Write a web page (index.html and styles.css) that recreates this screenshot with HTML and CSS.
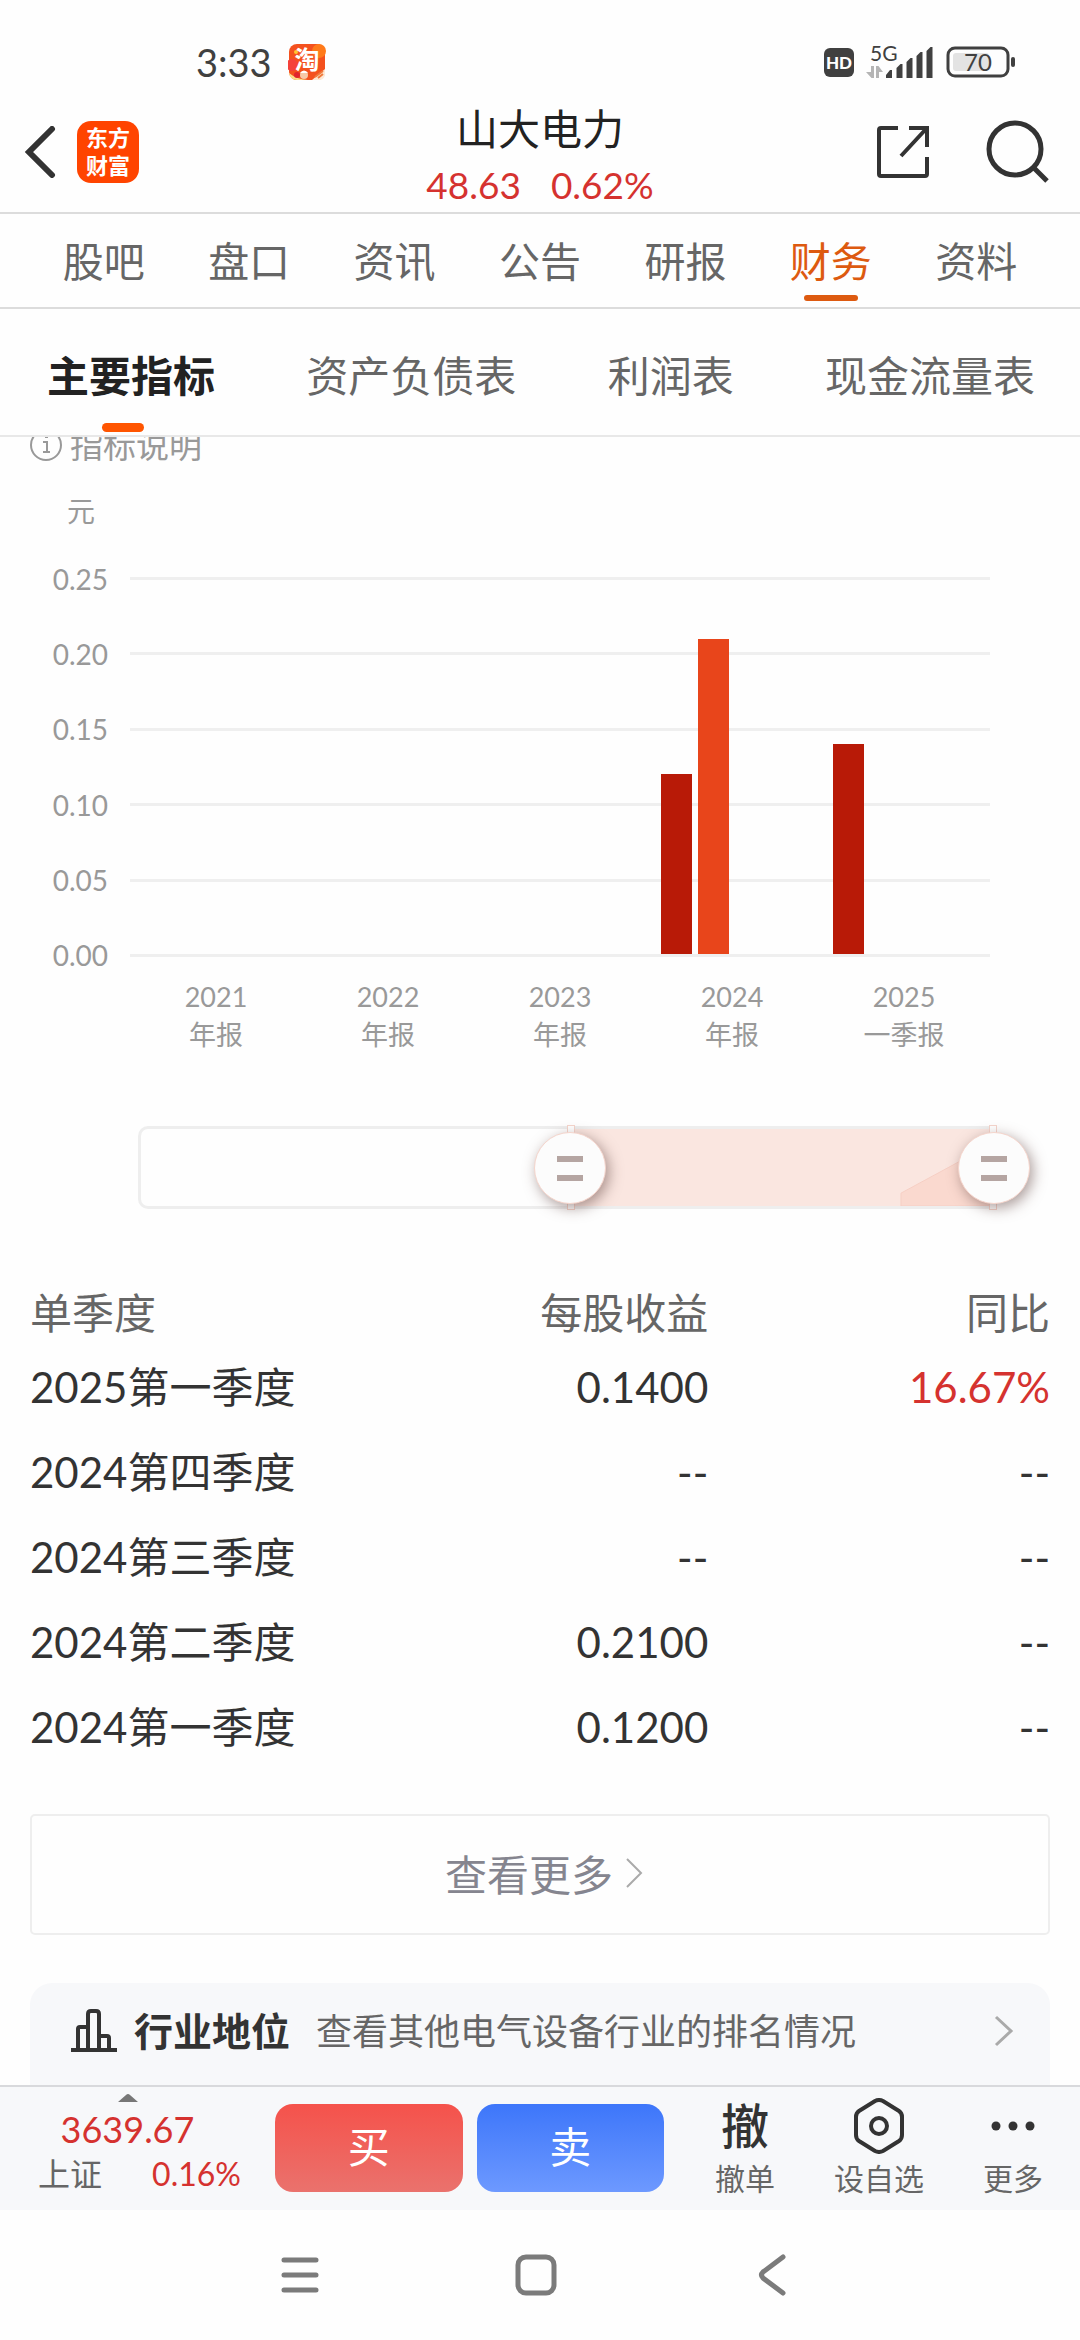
FILE: index.html
```html
<!DOCTYPE html>
<html lang="zh-CN">
<head>
<meta charset="utf-8">
<meta name="viewport" content="width=device-width, initial-scale=1">
<title>山大电力 - 财务</title>
<link rel="stylesheet" href="styles.css">
</head>
<body>
<div class="app">
  <div class="status">
    <div class="status-group">
      <span class="clock">3:33</span>
      <svg class="notice" width="38" height="38" viewBox="0 0 38 38" aria-hidden="true">
        <rect x="1" y="1" width="36" height="36" rx="8" fill="#f4511e"/>
        <circle cx="31" cy="8" r="7" fill="#ff7a1a"/>
        <circle cx="4" cy="22" r="6" fill="#f5413a"/>
        <path d="M1 30Q8 36 20 37H9Q2 37 1 30Z" fill="#fbe08a"/>
        <circle cx="9" cy="32" r="3" fill="#e0262e"/>
        <circle cx="16" cy="32" r="4" fill="#f7c9a8"/>
        <path d="M12 30q4-5 8 0z" fill="#fff"/>
        <path d="M24 37L37 26V32Q36 37 31 37Z" fill="#fde9d6"/>
        <path d="M27 34l8-6M30 35l5-4" stroke="#f07a3c" stroke-width="2"/>
        <circle cx="8" cy="9" r="2" fill="#ffc531"/>
        <text x="19" y="26" text-anchor="middle" class="notice-text">淘</text>
      </svg>
    </div>
    <div class="status-group status-right">
      <span class="hd">HD</span>
      <svg width="70" height="44" viewBox="0 -4 70 44" aria-hidden="true">
        <text x="5" y="17" class="net-text">5G</text>
        <path d="M9 22V34H6.500L1 28H6V22ZM11 34V22H13.500L18 28H14V34Z" fill="#b5b5b5"/>
        <path d="M21 34v-3l4-5h2v8zM31.500 34V24l4-4h2v14zM41.500 34V18l4-4h2v20zM51.500 34V12l4-4h2v26zM61.500 34V7l4-4h2v31z" fill="#404040"/>
      </svg>
      <svg width="70" height="32" viewBox="0 0 70 32" aria-hidden="true">
        <rect x="2" y="2" width="60" height="28" rx="7" fill="none" stroke="#404040" stroke-width="3"/>
        <rect x="7" y="7" width="36" height="18" rx="3" fill="#e3e3e3"/>
        <rect x="65" y="11" width="4" height="10" rx="2" fill="#404040"/>
        <text x="32" y="25" text-anchor="middle" class="battery-text">70</text>
      </svg>
    </div>
  </div>

  <header class="header">
    <div class="header-side">
      <button class="icon-button" aria-label="返回">
        <svg width="32" height="52" viewBox="0 0 32 52"><path d="M28 3L5 26L28 49" fill="none" stroke="#333" stroke-width="6" stroke-linecap="round"/></svg>
      </button>
      <svg width="64" height="64" viewBox="0 0 64 64" role="img" aria-label="东方财富">
        <rect x="1" y="1" width="62" height="62" rx="14" fill="#ff4400"/>
        <text x="32" y="26" text-anchor="middle" class="logo-text">东方</text>
        <text x="32" y="54" text-anchor="middle" class="logo-text">财富</text>
      </svg>
    </div>
    <div class="header-title">
      <h1>山大电力</h1>
      <p class="quote up"><span>48.63</span><span>0.62%</span></p>
    </div>
    <div class="header-side header-actions">
      <button class="icon-button" aria-label="分享">
        <svg width="54" height="54" viewBox="0 0 54 54" fill="none" stroke="#333" stroke-width="4"><path d="M22 3H5Q3 3 3 5V49Q3 51 5 51H49Q51 51 51 49V32M33 3H51V22M50 4L25 31"/></svg>
      </button>
      <button class="icon-button" aria-label="搜索">
        <svg width="64" height="64" viewBox="0 0 64 64" fill="none" stroke="#333" stroke-width="5"><circle cx="29" cy="29" r="26"/><path d="M48 48L61 61"/></svg>
      </button>
    </div>
  </header>

  <nav class="tabs" aria-label="栏目">
    <a href="#">股吧</a><a href="#">盘口</a><a href="#">资讯</a><a href="#">公告</a><a href="#">研报</a><a href="#" class="active" aria-current="page">财务</a><a href="#">资料</a>
  </nav>
  <nav class="subtabs" aria-label="财务报表">
    <a href="#" class="active" aria-current="page">主要指标</a><a href="#">资产负债表</a><a href="#">利润表</a><a href="#">现金流量表</a>
  </nav>

  <main class="content">
    <a href="#" class="hint">
      <svg width="32" height="32" viewBox="0 0 32 32" fill="none" stroke="#999" stroke-width="2"><circle cx="16" cy="16" r="15"/><path d="M13 13H17V23M13 23H20M15 8H18" /></svg>
      指标说明
    </a>

    <section class="chart" aria-label="每股收益">
      <div class="unit">元</div>
      <div class="plot-row">
        <div class="y-axis"><span>0.25</span><span>0.20</span><span>0.15</span><span>0.10</span><span>0.05</span><span>0.00</span></div>
        <div class="plot">
          <div class="lines"><i></i><i></i><i></i><i></i><i></i><i></i></div>
          <div class="years">
            <div class="year"></div>
            <div class="year"></div>
            <div class="year"></div>
            <div class="year"><span class="bar q1" style="height:48%"></span><span class="bar q2" style="height:84%"></span></div>
            <div class="year"><span class="bar q1" style="height:56%"></span></div>
          </div>
        </div>
      </div>
      <div class="x-axis">
        <span>2021<br>年报</span><span>2022<br>年报</span><span>2023<br>年报</span><span>2024<br>年报</span><span>2025<br>一季报</span>
      </div>
      <div class="range">
        <div class="range-fill" style="margin-left:50.3%">
          <svg viewBox="0 0 424 78" preserveAspectRatio="none" aria-hidden="true"><path d="M331 78V65L424 14V78Z" fill="#fad9cf" stroke="#f6cfc4"/></svg>
        </div>
        <input type="range" min="0" max="1000" value="503" aria-label="起始报告期">
        <input type="range" min="0" max="1000" value="1000" aria-label="结束报告期">
      </div>
    </section>

    <table class="quarters">
      <thead><tr><th>单季度</th><th>每股收益</th><th>同比</th></tr></thead>
      <tbody>
        <tr><td>2025第一季度</td><td>0.1400</td><td class="up">16.67%</td></tr>
        <tr><td>2024第四季度</td><td>--</td><td>--</td></tr>
        <tr><td>2024第三季度</td><td>--</td><td>--</td></tr>
        <tr><td>2024第二季度</td><td>0.2100</td><td>--</td></tr>
        <tr><td>2024第一季度</td><td>0.1200</td><td>--</td></tr>
      </tbody>
    </table>

    <button class="more">查看更多
      <svg width="18" height="30" viewBox="0 0 18 30" fill="none" stroke="#aaa" stroke-width="2"><path d="M2 1L16 15L2 29"/></svg>
    </button>

    <a href="#" class="rank">
      <svg width="48" height="44" viewBox="0 0 48 44" fill="none" stroke="#333" stroke-width="4"><path d="M1 41H47M8 41V20Q8 18 10 18H18M18 41V5Q18 2 21 2H26Q29 2 29 5V41M29 27H37Q39 27 39 29V41"/></svg>
      <strong>行业地位</strong>
      <span>查看其他电气设备行业的排名情况</span>
      <svg class="rank-arrow" width="20" height="32" viewBox="0 0 20 32" fill="none" stroke="#aaa" stroke-width="3"><path d="M2 2L17 16L2 30"/></svg>
    </a>
  </main>

  <footer class="trade">
    <a href="#" class="index">
      <svg width="20" height="8" viewBox="0 0 20 8"><path d="M0 8L8 1Q10 -1 12 1L20 8Z" fill="#777"/></svg>
      <span class="index-value up">3639.67</span>
      <span class="index-row"><span>上证</span><span class="index-change up">0.16%</span></span>
    </a>
    <div class="orders">
      <button class="buy">买</button>
      <button class="sell">卖</button>
    </div>
    <div class="tools">
      <button><span class="tool-icon">撤</span>撤单</button>
      <button><span class="tool-icon"><svg width="50" height="56" viewBox="0 0 50 56" fill="none" stroke="#333" stroke-width="4"><path d="M21 3Q25 1 29 3L45 13Q48 15 48 19V37Q48 41 45 43L29 53Q25 55 21 53L5 43Q2 41 2 37V19Q2 15 5 13Z"/><circle cx="25" cy="28" r="8"/></svg></span>设自选</button>
      <button><span class="tool-icon"><svg width="44" height="10" viewBox="0 0 44 10" fill="#333"><circle cx="5" cy="5" r="4.500"/><circle cx="22" cy="5" r="4.500"/><circle cx="39" cy="5" r="4.500"/></svg></span>更多</button>
    </div>
  </footer>

  <nav class="system" aria-label="系统导航">
    <button aria-label="最近任务"><svg width="44" height="44" viewBox="0 0 44 44"><path d="M6 7H38M6 22H38M6 37H38"/></svg></button>
    <button aria-label="主屏幕"><svg width="44" height="44" viewBox="0 0 44 44"><rect x="4" y="4" width="36" height="36" rx="8"/></svg></button>
    <button aria-label="返回"><svg width="44" height="44" viewBox="0 0 44 44"><path d="M33 4L13 19Q10 22 13 25L33 40"/></svg></button>
  </nav>
</div>
</body>
</html>
```
FILE: styles.css
```css
* { box-sizing: border-box; }

body {
  margin: 0;
  background: #fefefe;
  color: #333;
  font-family: Lato, "Noto Sans CJK SC", sans-serif;
  font-size: 42px;
}

a { color: inherit; text-decoration: none; }
button { padding: 0; border: 0; background: none; color: inherit; font: inherit; }
svg { display: block; flex: none; }
h1, p { margin: 0; font-weight: 400; }
.up { color: #d5322f; }

.app { display: flex; flex-direction: column; height: 100vh; overflow: hidden; }

/* Status bar */
.status {
  display: flex;
  justify-content: space-between;
  align-items: center;
  flex: none;
  height: 96px;
  padding: 28px 64px 0 196px;
  color: #404040;
}
.status-group { display: flex; align-items: center; gap: 16px; }
.status-right { gap: 11px; }
.clock { font-size: 38px; line-height: 48px; }
.notice-text { fill: #fff; font-size: 25px; font-weight: 700; }
.hd {
  width: 30px;
  border-radius: 6px;
  background: #404040;
  color: #fff;
  font-size: 17px;
  font-weight: 900;
  line-height: 29px;
  text-align: center;
}
.net-text { fill: #404040; font-size: 21px; }
.battery-text { fill: #404040; font-size: 24px; }

/* Header */
.header {
  display: grid;
  grid-template-columns: 1fr auto 1fr;
  flex: none;
  height: 118px;
  padding-top: 4px;
  border-bottom: 2px solid #dcdcdc;
}
.header-side { display: flex; align-items: center; gap: 20px; height: 104px; padding-left: 24px; }
.header-actions { justify-content: flex-end; gap: 56px; padding: 0 30px 0 0; }
.logo-text { fill: #fff; font-size: 22px; font-weight: 700; }
.header-title { text-align: center; }
.header-title h1 { color: #222; font-size: 42px; line-height: 58px; }
.quote { display: flex; justify-content: center; gap: 30px; font-size: 37px; line-height: 54px; }

/* Tabs */
.tabs { display: flex; flex: none; height: 95px; padding: 0 31px; border-bottom: 2px solid #dcdcdc; color: #666; font-size: 41px; }
.tabs a { position: relative; flex: 1; height: 93px; line-height: 95px; text-align: center; }
.tabs .active { color: #dd5a10; }
.tabs .active::after {
  content: "";
  position: absolute;
  bottom: 6px;
  left: calc(50% - 27px);
  width: 54px;
  height: 6px;
  border-radius: 3px;
  background: #dd5a10;
}
.subtabs { display: flex; justify-content: space-between; flex: none; height: 128px; padding: 0 45px 0 47px; border-bottom: 2px solid #e8e8e8; color: #666; }
.subtabs a { position: relative; height: 126px; line-height: 134px; }
.subtabs .active { color: #222; font-weight: 700; }
.subtabs .active::after {
  content: "";
  position: absolute;
  bottom: 3px;
  left: 33%;
  width: 42px;
  height: 9px;
  border-radius: 5px;
  background: #ff5500;
}

/* Scrolled content */
.content { flex: 1; min-height: 0; overflow: hidden; }
.hint { display: flex; align-items: center; gap: 8px; margin: -12px 30px 0; color: #999; font-size: 33px; line-height: 40px; }

.chart { padding: 0 90px 0 0; color: #999; font-size: 28px; }
.unit { padding: 26px 0 0 67px; line-height: 40px; }
.plot-row { display: flex; padding-top: 46px; }
.y-axis { display: flex; flex-direction: column; justify-content: space-between; width: 130px; height: 380px; padding-right: 22px; text-align: right; line-height: 4px; }
.plot { display: grid; flex: 1; }
.lines, .years { grid-area: 1 / 1; }
.lines { display: flex; flex-direction: column; justify-content: space-between; }
.lines i { height: 3px; background: #efefef; }
.years { display: grid; grid-template-columns: repeat(5, 1fr); height: 377px; padding-top: 2px; }
.year { display: grid; grid-template-columns: repeat(4, 1fr); align-items: end; gap: 6px; padding: 0 15px; }
.q1 { background: #b81a07; }
.q2 { background: #e8451b; }
.x-axis { display: grid; grid-template-columns: repeat(5, 1fr); padding: 21px 0 0 130px; font-size: 27px; line-height: 38px; text-align: center; }

/* Period range: two overlapping sliders on one track */
.range {
  position: relative;
  height: 83px;
  margin: 72px -4px 0 138px;
  border: 3px solid #eee;
  border-right: 0;
  border-radius: 10px 0 0 10px;
}
.range-fill { position: relative; background: #fae6e0; }
.range-fill svg { width: 100%; height: 77px; }
.range-fill::before, .range-fill::after {
  content: "";
  position: absolute;
  top: -4px;
  bottom: -4px;
  left: -3px;
  width: 6px;
  border: 1px solid #f5d5cc;
  background: #fff;
}
.range-fill::after { right: -3px; left: auto; }
.range input {
  position: absolute;
  top: -3px;
  left: -36px;
  width: calc(100% + 72px);
  height: 83px;
  margin: 0;
  appearance: none;
  background: none;
  pointer-events: none;
}
.range input::-webkit-slider-thumb {
  width: 72px;
  height: 72px;
  appearance: none;
  border: 1px solid #f5d5cc;
  border-radius: 50%;
  background:
    linear-gradient(#b5a5a2, #b5a5a2) 50% 23px / 26px 6px no-repeat,
    linear-gradient(#b5a5a2, #b5a5a2) 50% 42px / 26px 6px no-repeat,
    #fcfcfc;
  box-shadow: 3px 4px 14px rgba(90, 60, 55, 0.5);
  pointer-events: auto;
}

.quarters { width: calc(100% - 60px); margin: 73px 30px 0; border-spacing: 0; table-layout: fixed; }
.quarters th, .quarters td { height: 85px; padding: 0; text-align: right; font-weight: 400; line-height: 50px; }
.quarters th { height: 62px; color: #666; }
.quarters th:nth-child(2) { width: 33%; }
.quarters th:first-child, .quarters td:first-child { text-align: left; }

.more {
  display: flex;
  justify-content: center;
  align-items: center;
  gap: 12px;
  width: calc(100% - 60px);
  height: 121px;
  margin: 45px 30px 0;
  padding: 0 0 4px 8px;
  border: 2px solid #eee;
  border-radius: 5px;
  color: #85858f;
}
.rank { display: flex; align-items: center; margin: 48px 30px 0; padding: 20px 36px 60px 40px; border-radius: 22px 22px 0 0; background: #f7f8fa; line-height: 56px; }
.rank strong { margin: 0 26px 0 16px; font-size: 39px; }
.rank span { color: #666; font-size: 36px; }
.rank-arrow { margin-left: auto; }

/* Trade bar */
.trade { display: flex; flex: none; height: 125px; border-top: 2px solid #d8d9dc; background: #f7f8fa; }
.index { display: flex; flex-direction: column; align-items: center; width: 255px; padding-top: 7px; }
.index-value { padding-top: 4px; font-size: 36px; line-height: 46px; }
.index-row { display: flex; align-self: flex-end; justify-content: space-between; width: 217px; padding-right: 14px; color: #666; font-size: 32px; line-height: 44px; }
.orders { display: flex; flex: 1; gap: 14px; padding: 17px 14px 18px 20px; }
.orders button { flex: 1; padding-bottom: 8px; border-radius: 18px; color: #fff; }
.buy { background: linear-gradient(#f5524b, #ea726d); }
.sell { background: linear-gradient(#3d76fa, #6d99ff); }
.tools { display: flex; width: 402px; color: #666; font-size: 30px; }
.tools button { display: flex; flex: 1; flex-direction: column; align-items: center; line-height: 42px; }
.tool-icon { display: flex; align-items: center; height: 70px; padding-top: 8px; color: #333; font-size: 48px; font-weight: 500; }

/* System navigation */
.system { display: flex; justify-content: center; gap: 192px; flex: none; height: 130px; padding-right: 8px; background: #fefefe; }
.system svg { fill: none; stroke: #7b7b7b; stroke-width: 5; stroke-linecap: round; }
```
